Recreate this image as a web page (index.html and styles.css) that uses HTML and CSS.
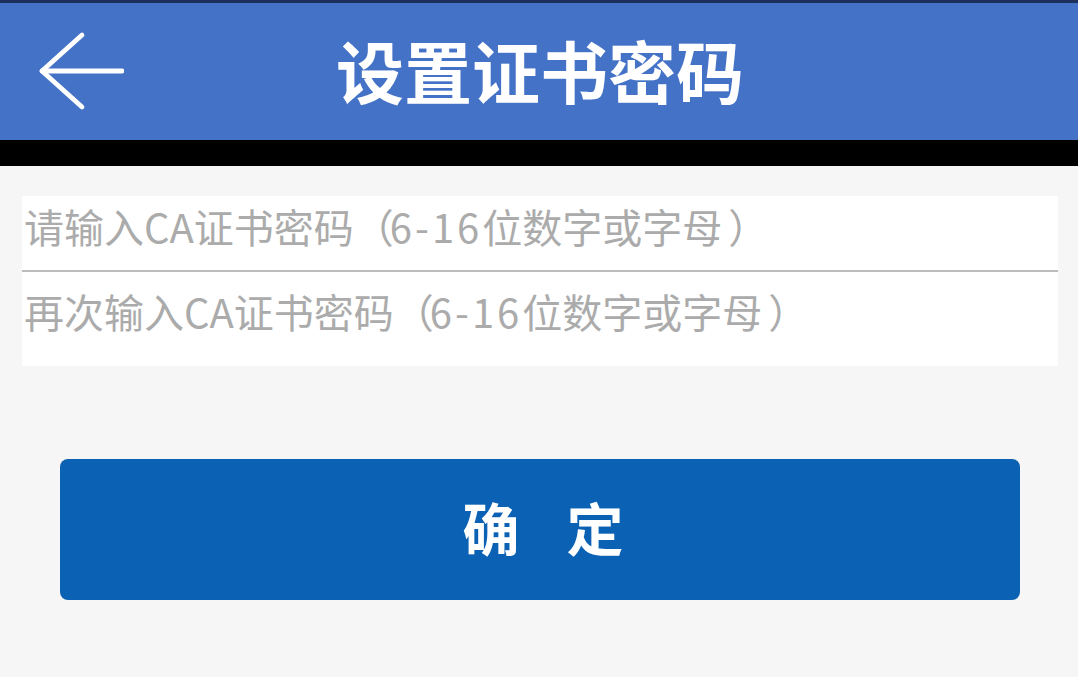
FILE: index.html
```html
<!DOCTYPE html>
<html lang="zh-CN">
<head>
<meta charset="utf-8">
<title>设置证书密码</title>
<link rel="stylesheet" href="styles.css">
</head>
<body>
<div class="topline"></div>
<header class="header">
  <div class="back">
    <svg width="86" height="80" viewBox="0 0 86 80" fill="none" stroke="#fff" stroke-width="4.8" stroke-linecap="round" stroke-linejoin="round">
      <path d="M44 4 L4 40 L44 76"/>
      <path d="M4 40 H84"/>
    </svg>
  </div>
  <h1 class="title">设置证书密码</h1>
  <div class="spacer"></div>
</header>
<div class="blackbar"></div>
<main class="content">
  <div class="card">
    <div class="field first">请输入CA证书密码（<span class="num">6-16</span>位数字或字母<span class="rp">）</span></div>
    <div class="divider"></div>
    <div class="field second">再次输入CA证书密码（<span class="num">6-16</span>位数字或字母<span class="rp">）</span></div>
  </div>
  <button class="confirm"><span class="c1">确</span><span>定</span></button>
</main>
</body>
</html>
```

FILE: styles.css
```css
* { box-sizing: border-box; }
html, body { margin: 0; padding: 0; }
body {
  width: 1078px;
  height: 677px;
  overflow: hidden;
  background: #f6f6f6;
  font-family: "Noto Sans CJK SC", "Noto Sans", sans-serif;
}
.topline { height: 3px; background: #1d2f5c; }
.header {
  height: 137px;
  background: #4472c6;
  display: flex;
  align-items: center;
  padding-left: 38px;
}
.back { width: 86px; height: 80px; margin-bottom: 1px; }
.back svg { display: block; }
.title {
  flex: 1;
  margin: 0 0 4px 0;
  text-align: center;
  color: #fff;
  font-size: 68px;
  font-weight: 700;
  line-height: 1;
  padding-right: 86px;
  padding-left: 4px;
}
.spacer { width: 40px; }
.blackbar { height: 26px; background: #000; }
.content { padding: 30px 20px 0 22px; }
.card {
  background: #fff;
  width: 1036px;
}
.field {
  color: #ababab;
  font-size: 40px;
  line-height: 40px;
  padding-left: 2px;
  white-space: nowrap;
}
.field .num { letter-spacing: 3px; margin-left: -4px; }
.field .rp { margin-left: 6px; }
.field.first { height: 74px; padding-top: 10px; }
.field.second { height: 94px; padding-top: 19px; }
.divider { height: 2px; background: #bcbcbc; }
.confirm {
  display: flex;
  justify-content: center;
  align-items: center;
  margin: 93px 0 0 38px;
  width: 960px;
  height: 141px;
  border: none;
  border-radius: 8px;
  background: #0b61b3;
  color: #fff;
  font-family: "Noto Sans CJK SC", sans-serif;
  font-size: 57px;
  font-weight: 700;
  line-height: 1;
  padding: 0 0 6px 6px;
}
.confirm .c1 { margin-right: 47px; }
```
